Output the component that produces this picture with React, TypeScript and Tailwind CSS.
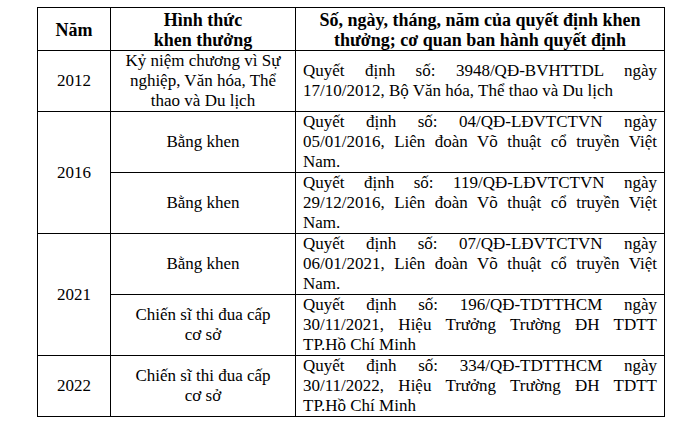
const serif = { fontFamily: '"Liberation Serif", "Times New Roman", serif' };

// Decision text is justified line by line so the breaks stay exactly where
// the scanned document has them.
function Justified({ lines }: { lines: string[] }) {
  return (
    <div className="px-[7px]">
      {lines.map((l, i) => (
        <div
          key={i}
          className={
            i < lines.length - 1
              ? "text-justify [text-align-last:justify] whitespace-nowrap"
              : "text-left whitespace-nowrap"
          }
        >
          {l}
        </div>
      ))}
    </div>
  );
}

const cell = "border border-black align-middle p-0";
const head = "border border-black align-middle p-0 pt-[2px] text-center";

export default function App() {
  return (
    <div className="bg-white w-[687px] h-[422px] pt-[7px] pl-[37px]" style={serif}>
      <table className="border-collapse w-[627px] table-fixed text-[17px] leading-[20px] text-black">
        <colgroup>
          <col className="w-[73px]" />
          <col className="w-[185px]" />
          <col className="w-[369px]" />
        </colgroup>
        <thead>
          <tr className="h-[43px] font-bold text-[18px] leading-[20px]">
            <th className={head}>Năm</th>
            <th className={head}>
              Hình thức
              <br />
              khen thưởng
            </th>
            <th className={head}>
              Số, ngày, tháng, năm của quyết định khen
              <br />
              thưởng; cơ quan ban hành quyết định
            </th>
          </tr>
        </thead>
        <tbody>
          <tr className="h-[61px]">
            <td className={`${cell} text-center`}>2012</td>
            <td className={`${cell} text-center`}>
              Kỷ niệm chương vì Sự
              <br />
              nghiệp, Văn hóa, Thể
              <br />
              thao và Du lịch
            </td>
            <td className={cell}>
              <Justified
                lines={[
                  "Quyết định số: 3948/QĐ-BVHTTDL ngày",
                  "17/10/2012, Bộ Văn hóa, Thể thao và Du lịch",
                ]}
              />
            </td>
          </tr>
          <tr className="h-[60px]">
            <td className={`${cell} text-center`} rowSpan={2}>
              2016
            </td>
            <td className={`${cell} text-center`}>Bằng khen</td>
            <td className={cell}>
              <Justified
                lines={[
                  "Quyết định số: 04/QĐ-LĐVTCTVN ngày",
                  "05/01/2016, Liên đoàn Võ thuật cổ truyền Việt",
                  "Nam.",
                ]}
              />
            </td>
          </tr>
          <tr className="h-[61px]">
            <td className={`${cell} text-center`}>Bằng khen</td>
            <td className={cell}>
              <Justified
                lines={[
                  "Quyết định số: 119/QĐ-LĐVTCTVN ngày",
                  "29/12/2016, Liên đoàn Võ thuật cổ truyền Việt",
                  "Nam.",
                ]}
              />
            </td>
          </tr>
          <tr className="h-[60px]">
            <td className={`${cell} text-center`} rowSpan={2}>
              2021
            </td>
            <td className={`${cell} text-center`}>Bằng khen</td>
            <td className={cell}>
              <Justified
                lines={[
                  "Quyết định số: 07/QĐ-LĐVTCTVN ngày",
                  "06/01/2021, Liên đoàn Võ thuật cổ truyền Việt",
                  "Nam.",
                ]}
              />
            </td>
          </tr>
          <tr className="h-[60px]">
            <td className={`${cell} text-center`}>
              Chiến sĩ thi đua cấp
              <br />
              cơ sở
            </td>
            <td className={cell}>
              <Justified
                lines={[
                  "Quyết định số: 196/QĐ-TDTTHCM ngày",
                  "30/11/2021, Hiệu Trưởng Trường ĐH TDTT",
                  "TP.Hồ Chí Minh",
                ]}
              />
            </td>
          </tr>
          <tr className="h-[61px]">
            <td className={`${cell} text-center`}>2022</td>
            <td className={`${cell} text-center`}>
              Chiến sĩ thi đua cấp
              <br />
              cơ sở
            </td>
            <td className={cell}>
              <Justified
                lines={[
                  "Quyết định số: 334/QĐ-TDTTHCM ngày",
                  "30/11/2022, Hiệu Trưởng Trường ĐH TDTT",
                  "TP.Hồ Chí Minh",
                ]}
              />
            </td>
          </tr>
        </tbody>
      </table>
    </div>
  );
}
